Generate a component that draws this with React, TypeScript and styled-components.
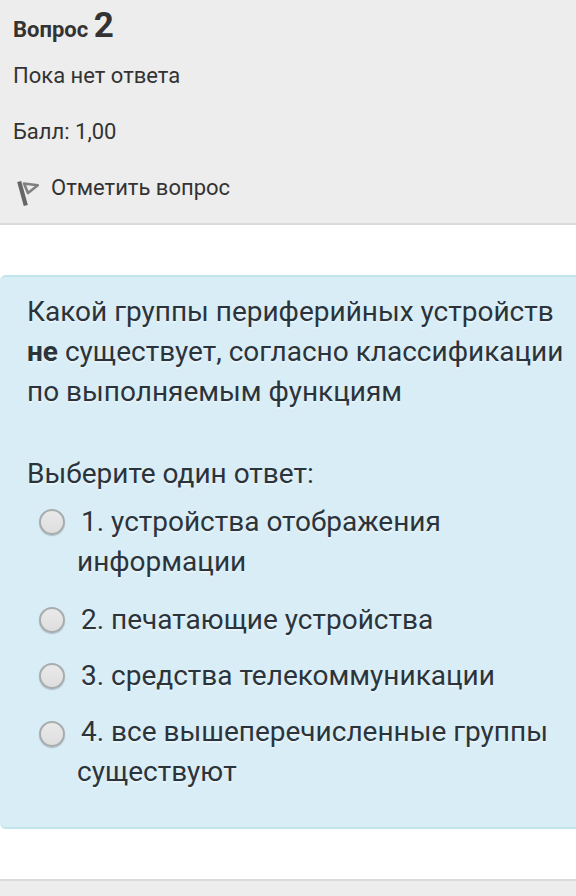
import React from "react";
import styled, { createGlobalStyle } from "styled-components";

const GlobalStyle = createGlobalStyle`
  body {
    margin: 0;
    background: #fff;
    color: #333;
    font-family: Roboto, "Noto Sans", sans-serif;
  }
`;

const Page = styled.main`
  width: 576px;
  height: 896px;
  overflow: hidden;
  display: flex;
  flex-direction: column;
`;

const Info = styled.section`
  box-sizing: border-box;
  flex: none;
  height: 225px;
  padding: 3px 13px 0;
  background: #ededed;
  border-bottom: 2px solid #dadada;
  font-size: 22px;
`;

const Heading = styled.h3`
  margin: 0;
  height: 44px;
  line-height: 46px;
  font-size: 22px;
  font-weight: 700;
  white-space: nowrap;
`;

const QuestionNumber = styled.span`
  font-size: 35px;
`;

const InfoRow = styled.div`
  display: flex;
  align-items: center;
  height: 56px;
  white-space: nowrap;
`;

const FlagIcon = styled.svg`
  width: 28px;
  height: 32px;
  margin: 9px 10px 0 0;
  flex: none;
  filter: blur(0.7px);
`;

const Question = styled.section`
  box-sizing: border-box;
  flex: none;
  height: 554px;
  margin-top: 50px;
  padding: 15px 0 0 27px;
  border: 2px solid #bfe4e9;
  border-width: 2px 0;
  border-radius: 6px 0 0 6px;
  background: #d9edf6;
  color: #2b343b;
  font-size: 28px;
  line-height: 40px;
  text-shadow: 0 2px 0 rgba(255, 255, 255, 0.4);
`;

const Line = styled.div`
  white-space: nowrap;
`;

const Prompt = styled.div`
  margin-top: 42px;
  white-space: nowrap;
`;

const Answers = styled.div`
  display: flex;
  flex-direction: column;
  gap: 16px;
  padding: 8px 0 0 12px;
`;

const Answer = styled.label`
  display: flex;
  align-items: flex-start;

  &:first-child {
    margin-bottom: 2px;
  }
`;

const Radio = styled.input<{ $top: number }>`
  appearance: none;
  box-sizing: border-box;
  flex: none;
  width: 26px;
  height: 26px;
  margin: ${(p) => p.$top}px 12px 0 0;
  border: 2px solid #a8acae;
  border-radius: 50%;
  background: linear-gradient(#e9e9e9, #dedede);
  box-shadow: 0 1px 1px rgba(90, 105, 115, 0.35);
`;

const AnswerText = styled.span`
  text-indent: 4px;
  white-space: pre;
`;

const NextInfo = styled.section`
  flex: 1;
  margin-top: 50px;
  border-top: 2px solid #dadada;
  background: #ededed;
`;

const answers = [
  { text: "1. устройства отображения\nинформации", radioTop: 7 },
  { text: "2. печатающие устройства", radioTop: 7 },
  { text: "3. средства телекоммуникации", radioTop: 7 },
  { text: "4. все вышеперечисленные группы\nсуществуют", radioTop: 9 },
];

export default function App() {
  return (
    <Page>
      <GlobalStyle />
      <Info>
        <Heading>
          Вопрос <QuestionNumber>2</QuestionNumber>
        </Heading>
        <InfoRow>Пока нет ответа</InfoRow>
        <InfoRow>Балл: 1,00</InfoRow>
        <InfoRow>
          <FlagIcon viewBox="0 0 28 32" fill="none">
            <path d="M6.2 5.5 L12.8 29.5" stroke="#666" strokeWidth="4.2" />
            <path d="M11 7.5 L24.8 9.3 L15 17 Z" stroke="#808080" strokeWidth="2.6" strokeLinejoin="round" />
          </FlagIcon>
          Отметить вопрос
        </InfoRow>
      </Info>
      <Question>
        <Line>Какой группы периферийных устройств</Line>
        <Line>
          <b>не</b> существует, согласно классификации
        </Line>
        <Line>по выполняемым функциям</Line>
        <Prompt>Выберите один ответ:</Prompt>
        <Answers>
          {answers.map(({ text, radioTop }) => (
            <Answer key={text}>
              <Radio type="radio" name="answer" $top={radioTop} />
              <AnswerText>{text}</AnswerText>
            </Answer>
          ))}
        </Answers>
      </Question>
      <NextInfo />
    </Page>
  );
}
